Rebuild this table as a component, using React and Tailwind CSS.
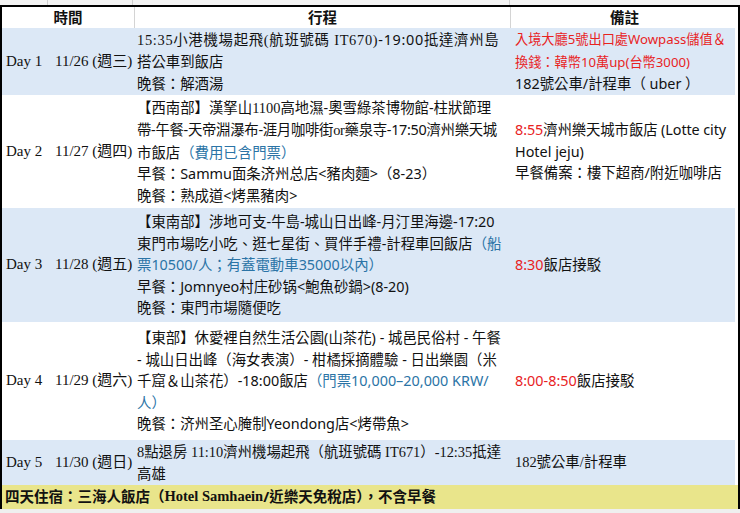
import React from "react";

const Serif = ({ children }) => (
  <span className="font-['Liberation_Serif','Noto_Sans_CJK_TC',serif]">{children}</span>
);
const Red = ({ children }) => <span className="text-[#e8231f]">{children}</span>;
const Teal = ({ children }) => <span className="text-[#2b74a6]">{children}</span>;

const days = [
  {
    day: "Day 1",
    date: "11/26 (週三)",
    h: "h-[67px]",
    blue: true,
    plan: [
      <span className="tracking-[0.7px]">
        <Serif>15:35</Serif>小港機場起飛<Serif>(</Serif>航班號碼 <Serif>IT670)</Serif>-19:00抵達濟州島
      </span>,
      "搭公車到飯店",
      "晚餐：解酒湯",
    ],
    note: [
      <span className="text-[13.2px]">
        <Red>入境大廳5號出口處Wowpass儲值＆</Red>
      </span>,
      <span className="text-[13.2px]">
        <Red>換錢：韓幣10萬up(台幣3000)</Red>
      </span>,
      "182號公車/計程車（ uber ）",
    ],
  },
  {
    day: "Day 2",
    date: "11/27 (週四)",
    h: "h-[113px]",
    plan: [
      <>
        【西南部】漢拏山<Serif>1100</Serif>高地濕-奧雪綠茶博物館-柱狀節理
      </>,
      <span className="tracking-[-0.3px]">
        帶-午餐-天帝淵瀑布-涯月咖啡街<Serif>or</Serif>藥泉寺-17:50濟州樂天城
      </span>,
      <>
        市飯店<Teal>（費用已含門票）</Teal>
      </>,
      "早餐：Sammu面条济州总店<豬肉麵>（8-23）",
      "晚餐：熟成道<烤黑豬肉>",
    ],
    note: [
      <span className="tracking-[-0.1px]">
        <Red>8:55</Red>濟州樂天城市飯店 (Lotte city
      </span>,
      "Hotel jeju)",
      "早餐備案：樓下超商/附近咖啡店",
    ],
  },
  {
    day: "Day 3",
    date: "11/28 (週五)",
    h: "h-[114px]",
    blue: true,
    plan: [
      "【東南部】涉地可支-牛島-城山日出峰-月汀里海邊-17:20",
      <>
        東門市場吃小吃、逛七星街、買伴手禮-計程車回飯店<Teal>（船</Teal>
      </>,
      <Teal>票10500/人；有蓋電動車35000以內）</Teal>,
      "早餐：Jomnyeo村庄砂锅<鮑魚砂鍋>(8-20)",
      "晚餐：東門市場隨便吃",
    ],
    note: [
      <>
        <Red>8:30</Red>飯店接駁
      </>,
    ],
  },
  {
    day: "Day 4",
    date: "11/29 (週六)",
    h: "h-[118px]",
    plan: [
      "【東部】休愛裡自然生活公園(山茶花) - 城邑民俗村 - 午餐",
      "- 城山日出峰（海女表演）- 柑橘採摘體驗 - 日出樂園（米",
      <>
        千窟＆山茶花）-18:00飯店<Teal>（門票10,000–20,000 KRW/</Teal>
      </>,
      <Teal>人）</Teal>,
      "晚餐：济州圣心腌制Yeondong店<烤帶魚>",
    ],
    note: [
      <>
        <Red>8:00-8:50</Red>飯店接駁
      </>,
    ],
  },
  {
    day: "Day 5",
    date: "11/30 (週日)",
    h: "h-[45px]",
    blue: true,
    plan: [
      <Serif>8點退房 11:10濟州機場起飛（航班號碼 IT671）-12:35抵達</Serif>,
      "高雄",
    ],
    note: [<Serif>182號公車/計程車</Serif>],
  },
];

export default function App() {
  return (
    <div className="w-[740px] h-[513px] overflow-hidden bg-[#efefef] text-[#111] font-['Noto_Sans','Noto_Sans_CJK_TC',sans-serif] text-[14.4px]">
      {/* gridlines from the sheet above */}
      <div className="h-[5px] grid grid-cols-[48px_85px_377px_1fr] bg-[#f3f3f3]">
        <div className="border-r border-[#cfcfcf]" />
        <div className="border-r border-[#cfcfcf]" />
        <div className="border-r border-[#cfcfcf]" />
        <div />
      </div>

      <div className="border-l-2 border-t-2 border-r-2 border-black bg-white">
        <div className="h-[21px] grid grid-cols-[48px_85px_376px_1fr] items-center font-bold text-[14.5px] leading-[21px]">
          <div className="col-span-2 text-center border-r border-[#d4d4d4] h-full">時間</div>
          <div className="text-center border-r border-[#d4d4d4] h-full">行程</div>
          <div className="text-center h-full">備註</div>
        </div>

        {days.map((d, i) => (
          <div
            key={i}
            className={`grid grid-cols-[48px_85px_376px_1fr] items-center leading-[21.5px] ${d.h} ${
              d.blue ? "bg-[#dce8f6] border-r-[3px] border-white" : "bg-white"
            }`}
          >
            <div className="pl-[4px] text-[15px] whitespace-nowrap font-['Liberation_Serif','Noto_Sans_CJK_TC',serif]">
              {d.day}
            </div>
            <div className="pl-[5px] text-[15px] whitespace-nowrap font-['Liberation_Serif','Noto_Sans_CJK_TC',serif]">
              {d.date}
            </div>
            <div className="pl-[2px] whitespace-nowrap">
              {d.plan.map((line, j) => (
                <div key={j}>{line}</div>
              ))}
            </div>
            <div className="pl-[4px] whitespace-nowrap">
              {d.note.map((line, j) => (
                <div key={j}>{line}</div>
              ))}
            </div>
          </div>
        ))}

        <div className="h-[24px] flex items-center pl-[3px] bg-[#e9e58b] font-bold text-[14.5px] whitespace-nowrap">
          四天住宿：三海人飯店（<Serif>Hotel Samhaein</Serif>/近樂天免稅店），不含早餐
        </div>
      </div>
    </div>
  );
}
